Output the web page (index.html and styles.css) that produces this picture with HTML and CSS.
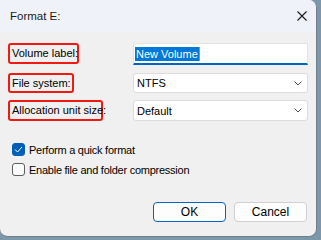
FILE: index.html
```html
<!DOCTYPE html>
<html>
<head>
<meta charset="utf-8">
<link rel="stylesheet" href="styles.css">
</head>
<body>
<div class="win">
  <div class="titlebar">
    <span class="title">Format E:</span>
    <svg class="close" width="10" height="10" viewBox="0 0 10 10"><path d="M0.5 0.5 L9.5 9.5 M9.5 0.5 L0.5 9.5" stroke="#1a1a1a" stroke-width="1.1" fill="none"/></svg>
  </div>
  <div class="content">
    <div class="form">
      <div class="row r1">
        <span class="lbl">Volume label:</span>
        <div class="input"><span class="sel">New Volume</span><span class="caret"></span></div>
      </div>
      <div class="row r2">
        <span class="lbl">File system:</span>
        <div class="combo"><span>NTFS</span><svg width="8" height="5" viewBox="0 0 8 5"><path d="M0.5 0.5 L4 4 L7.5 0.5" stroke="#555" stroke-width="1" fill="none"/></svg></div>
      </div>
      <div class="row r3">
        <span class="lbl">Allocation unit size:</span>
        <div class="combo"><span>Default</span><svg width="8" height="5" viewBox="0 0 8 5"><path d="M0.5 0.5 L4 4 L7.5 0.5" stroke="#555" stroke-width="1" fill="none"/></svg></div>
      </div>
    </div>
    <div class="checks">
      <label class="chk"><span class="box on"><svg width="9" height="7" viewBox="0 0 9 7"><path d="M1 3.5 L3.5 6 L8 1" stroke="#fff" stroke-width="1" fill="none"/></svg></span>Perform a quick format</label>
      <label class="chk"><span class="box"></span>Enable file and folder compression</label>
    </div>
    <div class="buttons">
      <button class="btn ok">OK</button>
      <button class="btn">Cancel</button>
    </div>
  </div>
</div>
</body>
</html>
```
FILE: styles.css
```css
html, body {
  margin: 0;
  padding: 0;
}
body {
  width: 321px;
  height: 239px;
  background: #7c97aa;
  font-family: "Liberation Sans", Arial, sans-serif;
  font-size: 11px;
  color: #000;
  overflow: hidden;
}
.win {
  width: 316px;
  height: 236px;
  background: #f0f0f0;
  border-right: 1px solid #6f7f8c;
  border-bottom: 1px solid #6f7f8c;
  border-radius: 0 8px 8px 8px;
  overflow: hidden;
  display: flex;
  flex-direction: column;
  white-space: nowrap;
}
.titlebar {
  height: 32px;
  background: #eff3f9;
  display: flex;
  align-items: center;
  justify-content: space-between;
  padding: 0 9px 0 10px;
  flex: none;
}
.title {
  color: #1a1a1a;
  font-size: 11.5px;
  margin-top: -1px;
}
.close {
  margin-top: -1px;
}
.content {
  flex: 1;
  display: flex;
  flex-direction: column;
  padding: 11px 0 0 8px;
}
.form {
  display: flex;
  flex-direction: column;
}
.row {
  display: flex;
  align-items: center;
  height: 22px;
}
.r2 { margin-top: 8px; height: 20px; }
.r3 { margin-top: 7px; height: 21px; }
.lbl {
  box-sizing: border-box;
  height: 100%;
  border: 2px solid #f01a12;
  border-radius: 3px;
  padding: 0 2px;
  display: flex;
  align-items: center;
  line-height: 1;
}
.r1 .lbl { width: 71px; height: 21px; align-self: flex-start; }
.r2 .lbl { width: 66px; }
.r3 .lbl { width: 95px; }
.input, .combo {
  margin-left: auto;
  margin-right: 8px;
  width: 175px;
  box-sizing: border-box;
  height: 100%;
  background: #fff;
}
.input {
  border: 1px solid #e3e3e3;
  border-bottom: 2px solid #0067c0;
  display: flex;
  align-items: center;
  padding-left: 1px;
}
.sel {
  background: #0078d7;
  color: #fff;
  padding: 0 1px;
  line-height: 14px;
}
.caret {
  width: 1px;
  height: 14px;
  background: #f07a1e;
}
.combo {
  border: 1px solid #dcdcdc;
  border-radius: 3px;
  display: flex;
  align-items: center;
  justify-content: space-between;
  padding: 0 5px 0 3px;
}
.checks {
  margin-top: 22px;
  display: flex;
  flex-direction: column;
  gap: 7px;
  padding-left: 4px;
}
.chk {
  display: flex;
  align-items: center;
  height: 13px;
  gap: 4px;
  letter-spacing: -0.25px;
}
.box {
  box-sizing: border-box;
  width: 13px;
  height: 13px;
  border: 1px solid #5e5e5e;
  border-radius: 3px;
  background: #fbfbfb;
  display: flex;
  align-items: center;
  justify-content: center;
}
.box.on {
  background: #005fb8;
  border-color: #005fb8;
}
.buttons {
  margin-top: auto;
  margin-bottom: 14px;
  display: flex;
  justify-content: flex-end;
  gap: 8px;
  padding-right: 9px;
}
.btn {
  box-sizing: border-box;
  width: 73px;
  height: 20px;
  background: #fdfdfd;
  border: 1px solid #d0d0d0;
  border-radius: 4px;
  font-family: inherit;
  font-size: 12px;
  color: #000;
  padding: 0;
}
.btn.ok {
  border-color: #0067c0;
}
```
